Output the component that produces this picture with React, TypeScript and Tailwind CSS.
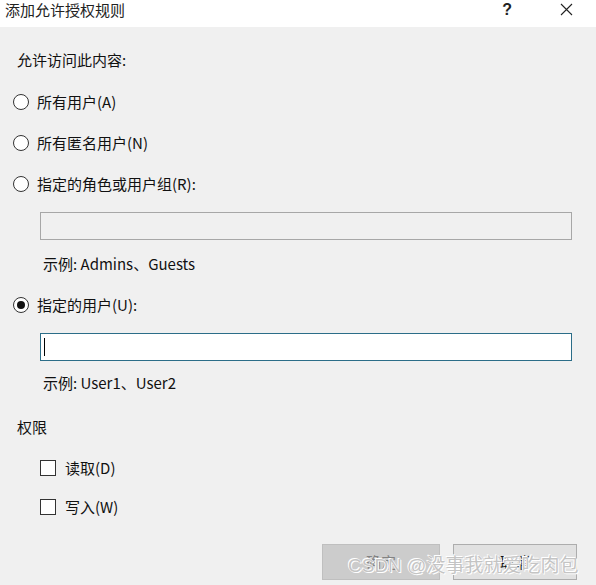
import React from "react";

const font = "font-['Noto_Sans_CJK_SC','Noto_Sans',sans-serif]";

const Radio = ({ checked, label }: { checked?: boolean; label: string }) => (
  <div className="flex h-[22px] items-center">
    <span className="ml-[13px] flex h-[16px] w-[16px] items-center justify-center rounded-full border-[1.5px] border-[#333] bg-white">
      {checked && <span className="h-[8px] w-[8px] rounded-full bg-[#111]" />}
    </span>
    <span className="ml-[8px]">{label}</span>
  </div>
);

const Check = ({ label }: { label: string }) => (
  <div className="flex h-[22px] items-center">
    <span className="ml-[40px] h-[16px] w-[16px] border border-[#333] bg-white" />
    <span className="ml-[9px]">{label}</span>
  </div>
);

const App = () => {
  return (
    <div className={`relative h-[585px] w-[596px] overflow-hidden bg-[#f0f0f0] text-[15px] text-[#111] ${font}`}>
      <div className="flex h-[27px] items-start bg-white">
        <span className="ml-[5px] text-[15px] leading-[20px] text-[#222]">添加允许授权规则</span>
        <span className="ml-auto font-['Liberation_Sans',sans-serif] text-[16px] font-bold leading-[20px] text-[#222]">?</span>
        <svg className="ml-[48px] mr-[23px] mt-[3px]" width="13" height="13" viewBox="0 0 13 13">
          <path d="M1 1 L12 12 M12 1 L1 12" stroke="#222" strokeWidth="1.1" />
        </svg>
      </div>

      <div className="flex flex-col">
        <div className="ml-[17px] mt-[22px] flex h-[22px] items-center">允许访问此内容:</div>
        <div className="mt-[20px]">
          <Radio label="所有用户(A)" />
        </div>
        <div className="mt-[19px]">
          <Radio label="所有匿名用户(N)" />
        </div>
        <div className="mt-[19px]">
          <Radio label="指定的角色或用户组(R):" />
        </div>
        <div className="ml-[40px] mt-[17px] h-[28px] w-[532px] border border-[#a7a7a7] bg-[#f0f0f0]" />
        <div className="ml-[43px] mt-[13px] flex h-[22px] items-center">示例: Admins、Guests</div>
        <div className="mt-[19px]">
          <Radio checked label="指定的用户(U):" />
        </div>
        <div className="ml-[40px] mt-[17px] flex h-[28px] w-[532px] items-center border border-[#2b6d88] bg-white">
          <span className="ml-[3px] h-[18px] w-px bg-black" />
        </div>
        <div className="ml-[43px] mt-[11px] flex h-[22px] items-center">示例: User1、User2</div>
        <div className="ml-[17px] mt-[22px] flex h-[22px] items-center">权限</div>
        <div className="mt-[19px]">
          <Check label="读取(D)" />
        </div>
        <div className="mt-[17px]">
          <Check label="写入(W)" />
        </div>
        <div className="mt-[26px] flex">
          <button
            type="button"
            disabled
            className="ml-[322px] h-[36px] w-[118px] border border-[#bfbfbf] bg-[#cccccc] text-[#838383]"
          >
            确定
          </button>
          <button
            type="button"
            className="ml-[13px] h-[36px] w-[124px] border border-[#adadad] bg-[#e1e1e1] text-[#111]"
          >
            取消
          </button>
        </div>
      </div>

      <div className="absolute left-[348px] top-[553px] text-[19px] leading-[26px] text-[#c4c4c4] [text-shadow:0_0_1px_#fff,0_0_1px_#fff,1px_1px_0_#fff,-1px_-1px_0_#fff] font-['Liberation_Sans','Noto_Sans_CJK_SC',sans-serif]">
        CSDN @没事我就爱吃肉包
      </div>
    </div>
  );
};

export default App;
